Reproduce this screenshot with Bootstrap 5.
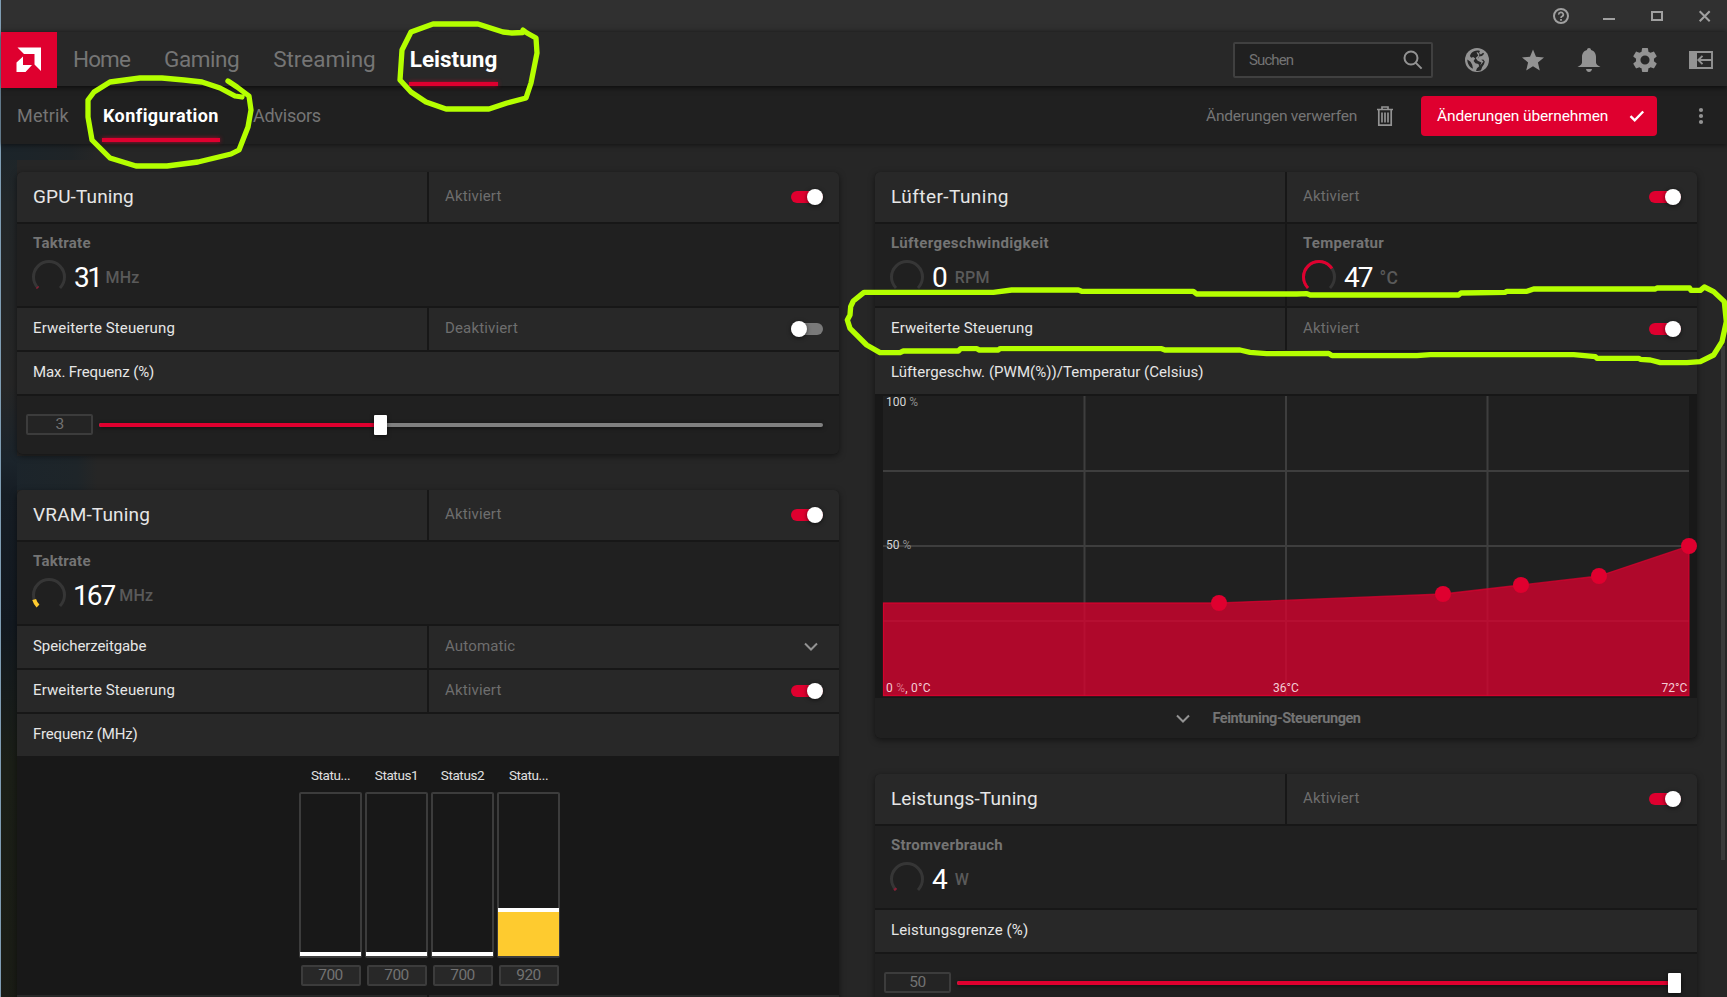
<!DOCTYPE html>
<html lang="de">
<head>
<meta charset="utf-8">
<meta name="viewport" content="width=device-width, initial-scale=1">
<title>Leistung – Konfiguration</title>
<link href="https://cdn.jsdelivr.net/npm/bootstrap@5.3.0/dist/css/bootstrap.min.css" rel="stylesheet">
<style>
:root{--red:#df002f;--icon:#939393;--muted:#6e6e6e;--line:#171717;--cell:#282828;--dark:#202020}
html,body{height:100%}
body{background:#262626;color:#e6e6e6;font-family:Roboto,"Liberation Sans",sans-serif;font-size:15px;line-height:20px;overflow:hidden}
svg{display:block;flex:none}
.app{height:997px;border-left:1px solid #7f9db3;background:linear-gradient(90deg,#1b242a 0,#1f2427 70px,#262626 96px,transparent 110px) 0 144px/100% 16px no-repeat,linear-gradient(#1d2529 0,#222628 60px,#262626 240px,#1b242b 316px,#161d24 350px,#131920 480px,#1b1f17 620px,#1a1b15 100%) 0 144px/16px 100% no-repeat,linear-gradient(90deg,#1b242b 0,#1e2529 76px,#262626 96px,transparent 110px) 0 456px/100% 34px no-repeat,#262626}
.titlebar{height:32px;background:#303030;padding-right:15px}
.mainbar{height:54px;background:#282828;z-index:2;box-shadow:0 1px 6px rgba(0,0,0,.75);padding-top:2px}
.brand{width:56px;height:56px;background:var(--red);margin:-2px 0 -2px}
.subbar{height:58px;background:var(--dark);z-index:1;box-shadow:0 1px 5px rgba(0,0,0,.55);padding:2px 0 0 16px}
.mainnav{gap:34px;margin-left:16px;font-size:22.5px}
.subnav{gap:34px;font-size:18px}
.tab{color:#757575;text-decoration:none;white-space:nowrap;height:54px;display:flex;align-items:center;position:relative}
.mainnav .tab{padding-bottom:2px}
.subnav .tab{height:58px;padding-bottom:1px}
.tab.on{color:#fff;font-weight:700}
.tab.on::after{content:"";position:absolute;left:-1px;right:-1px;bottom:1px;height:4px;background:var(--red);box-shadow:0 0 4px rgba(223,0,47,.7)}
.subnav .tab.on::after{bottom:3px}
.search{width:200px;height:36px;border:2px solid #404040;border-radius:2px;background:#202020;color:#737373;padding:0 8px 0 14px;margin-right:32px;letter-spacing:-.9px}
.apply{width:236px;height:40px;background:var(--red);border:0;border-radius:4px;color:#fff;font-size:15.5px;line-height:20px;padding:0 12px 1px 16px;letter-spacing:-.12px}
.discard{font-size:15.5px;color:#757575;letter-spacing:-.23px}
.content{padding:28px 29px 0 16px;gap:36px;height:853px;align-items:flex-start}
.stack{width:822px;gap:36px}
.tile{background:var(--line);border-radius:5px;gap:2px;box-shadow:0 2px 6px rgba(0,0,0,.5);overflow:hidden}
.split{display:grid;grid-template-columns:1fr 1fr;gap:2px}
.cell{background:var(--cell);height:42px;padding:0 16px 2px 16px;display:flex;align-items:center;justify-content:space-between;white-space:nowrap;letter-spacing:.12px}
.state{color:var(--muted);letter-spacing:.15px}
.head .cell{height:50px;padding-bottom:3px}
.head .name{font-size:19px;padding-bottom:1px}
.meter{background:var(--dark);height:82px;padding:9px 15px 0}
.meter .cap{font-weight:700;color:#747474;padding-left:1px;letter-spacing:.25px}
.reading{margin-top:7px;height:34px}
.num{font-size:28px;color:#fff;letter-spacing:-2px;margin-left:8px;line-height:34px;padding-top:1px}
.unit{font-size:16px;font-weight:500;color:#5a5a5a;margin-left:9px;padding-top:2px;letter-spacing:.2px}
.toggle{width:32px;height:16px;position:relative;margin-top:2px;flex:none}
.head .toggle{margin-top:3px}
.toggle::before{content:"";position:absolute;inset:2px 0;border-radius:6px;background:var(--red)}
.toggle::after{content:"";position:absolute;right:0;top:0;width:16px;height:16px;border-radius:50%;background:#fff;box-shadow:0 1px 4px rgba(0,0,0,.6)}
.toggle.off::before{background:#7a7a7a}
.toggle.off::after{right:auto;left:0}
.slide{background:var(--dark);height:58px;padding:0 16px 1px 9px}
.box{border:2px solid #3c3c3c;border-radius:2px;background:#242424;color:#727272;font-size:15.5px;letter-spacing:-.5px;line-height:17px;text-align:center;height:21px}
.slide .box{width:67px;margin-right:6px}
.track{height:4px;border-radius:2px;background:#808080;position:relative;box-shadow:0 1px 4px rgba(0,0,0,.5)}
.track i{display:block;height:4px;background:var(--red);border-radius:2px}
.track b{position:absolute;top:-8px;width:13px;height:20px;margin-left:-6.5px;background:#fff;border-radius:1px;box-shadow:0 1px 4px rgba(0,0,0,.6)}
.states{background:#181818;height:239px;margin-top:-2px;padding:9px 0 0 3px;gap:3px}
.stat{width:63px}
.stat .lbl{font-size:13.5px;letter-spacing:-.4px;line-height:20px;height:27px;color:#e0e0e0}
.well{height:166px;border:2px solid #3c3c3c;border-radius:2px}
.well i{display:block;background:#fecb2f;border-top:4px solid #fff;margin:0 -1px}
.stat .box{width:60px;margin:7px auto 0;background:#282828}
.fan{background:#181818;height:302px;padding:0 8px;overflow:visible}
.more{background:var(--dark);height:40px;margin-top:-2px;color:#747474;font-weight:700;font-size:14.5px;letter-spacing:-.46px;gap:22px;padding:2px 35px 0 0}
.scroll{width:4px;height:514px;background:#3a3a3a;position:absolute;left:1720px;top:346px}
.notes{position:absolute;inset:0;z-index:5;pointer-events:none}
</style>
</head>
<body>
<div class="app d-flex flex-column position-relative">
  <div class="titlebar d-flex align-items-center justify-content-end">
    <svg width="160" height="32" viewBox="1552 0 160 32" fill="none" stroke="#a0a0a0" stroke-width="2"><circle cx="1561" cy="16" r="7"/><path d="M1558.700 14.600a2.300 2.100 0 1 1 3.500 1.700q-1.200.6-1.200 1.600" stroke-width="1.700"/><path d="M1561 19v1.700" stroke-width="1.800"/><path d="M1603 19h12M1652 12h10v8h-10z"/><path d="m1699.700 11.200 10 10m0-10-10 10"/></svg>
  </div>

  <header class="mainbar d-flex align-items-center position-relative">
    <div class="brand d-flex align-self-start">
      <svg width="56" height="56" viewBox="1 32 56 56" fill="#fff"><path d="M17.500 47.500H41V71l-6.500-6.500V54H24z"/><path d="M23 56.500V65h9l-6.500 7H16.500V62.500z"/></svg>
    </div>
    <nav class="mainnav d-flex me-auto">
      <a class="tab" href="#" style="letter-spacing:-.89px">Home</a>
      <a class="tab" href="#" style="letter-spacing:-.45px">Gaming</a>
      <a class="tab" href="#">Streaming</a>
      <a class="tab on" href="#">Leistung</a>
    </nav>
    <div class="search d-flex align-items-center justify-content-between">Suchen
      <svg width="20" height="20" viewBox="0 0 20 20" fill="none" stroke="#939393" stroke-width="2"><circle cx="8" cy="8" r="6.500"/><path d="m12.600 12.600 6 6"/></svg>
    </div>
    <div class="d-flex align-items-center" style="gap:32px;margin-right:14px">
      <svg width="24" height="24" viewBox="0 0 24 24"><circle cx="12" cy="12" r="12" fill="#939393"/><path fill="#282828" d="M9 3.200c2-.8 4.500-.8 6-.2l-1 2 1.800 1.600 2.300-1.800 1.100 1-2.200 2.200-3 .6-1 2 2.200 1.400 3-.6 1.600 2.200-.8 2.600-1.800 2.800-1.200 3.200c-1.500.8-3.500 1-5 .6l1-2.500 2.200-2-.8-2.200-3-.8-1.800-2.400 1.600-2.400-2-1.600-2 .8-1.300-1.600C5.500 5.600 7 4 9 3.200zM2.300 11.500l3.200 2.200 1.700 3 .8 4c-3.600-1.600-5.700-5-5.700-9.200z"/><path fill="#939393" d="m11.500 4.500 1.800 3-2.600 2.600 2 2.600 3.800 1.700-1.500 3.400 3.500-4.300-3.500-2.800-2.200-.5 1.300-2 .2-2.200-1.500-1.700z"/></svg>
      <svg width="24" height="24" viewBox="0 0 24 24" fill="#939393"><path d="m12 1.500 3 7.300 8 .6-6.100 5.200 1.900 7.900L12 18.300l-6.800 4.200 1.900-7.900L1 9.400l8-.6z"/></svg>
      <svg width="24" height="24" viewBox="0 0 24 24" fill="#939393"><path d="M12 0c1.300 0 1.900.8 2 2 3.600 1 5 3.800 5 7v5.500c0 1.500 1.200 2.700 4.500 4.500H.5C3.800 17.200 5 16 5 14.500V9c0-3.200 1.400-6 5-7 .1-1.200.7-2 2-2zM9 21h6c-.3 1.800-1.500 3-3 3s-2.700-1.200-3-3z"/></svg>
      <svg width="24" height="24" viewBox="2 2 20 20" fill="#939393"><path d="M19.430 12.980c.040-.320.070-.640.070-.980s-.030-.660-.070-.980l2.110-1.650c.190-.150.240-.420.120-.640l-2-3.460c-.120-.220-.390-.300-.610-.220l-2.490 1c-.520-.400-1.080-.730-1.690-.980l-.380-2.650C14.460 2.180 14.250 2 14 2h-4c-.250 0-.460.180-.490.420l-.380 2.650c-.610.250-1.170.590-1.690.980l-2.490-1c-.230-.090-.490 0-.610.220l-2 3.460c-.130.220-.070.490.120.640l2.110 1.650c-.040.320-.070.650-.070.980s.030.660.070.980l-2.110 1.650c-.190.150-.240.420-.120.640l2 3.460c.120.220.390.300.610.220l2.490-1c.520.400 1.080.730 1.690.980l.380 2.650c.030.240.240.420.490.420h4c.250 0 .460-.180.490-.420l.380-2.650c.610-.250 1.170-.590 1.690-.980l2.490 1c.230.090.490 0 .610-.220l2-3.460c.120-.220.070-.490-.120-.640l-2.110-1.650zM12 15.800a3.800 3.800 0 1 1 0-7.600 3.800 3.800 0 0 1 0 7.600z"/></svg>
      <svg width="24" height="24" viewBox="0 0 24 24" fill="none" stroke="#939393" stroke-width="2"><path d="M0 3h8v18H0z" fill="#939393" stroke="none"/><path d="M1 4h22v16H1zM9.500 12H23M13.500 7.800 9.300 12l4.200 4.200" stroke-width="1.900"/></svg>
    </div>
  </header>

  <div class="subbar d-flex align-items-center position-relative">
    <nav class="subnav d-flex me-auto">
      <a class="tab" href="#" style="letter-spacing:.2px">Metrik</a>
      <a class="tab on" href="#" style="letter-spacing:.45px">Konfiguration</a>
      <a class="tab" href="#" style="letter-spacing:-.24px">Advisors</a>
    </nav>
    <span class="discard">Änderungen verwerfen</span>
    <svg class="ms-3" width="24" height="24" viewBox="0 0 24 24" fill="none" stroke="#939393" stroke-width="1.700"><path d="M4 5.500h16M9 5V3h6v2M5.800 6v15.200h12.400V6M9 8.500v10M12 8.500v10M15 8.500v10"/></svg>
    <button class="apply d-flex align-items-center justify-content-between" style="margin:0 36px 0 24px">Änderungen übernehmen
      <svg width="16" height="14" viewBox="0 0 16 14" fill="none" stroke="#fff" stroke-width="2.400"><path d="m1.500 7.200 4.200 4.200L14.200 2.500"/></svg>
    </button>
    <svg width="16" height="20" viewBox="0 0 16 20" fill="#939393" style="margin-right:18px"><circle cx="8" cy="4" r="2.100"/><circle cx="8" cy="10" r="2.100"/><circle cx="8" cy="16" r="2.100"/></svg>
  </div>

  <main class="content d-flex">
    <div class="stack d-flex flex-column">
      <section class="tile d-flex flex-column">
        <div class="split head"><div class="cell name">GPU-Tuning</div><div class="cell state">Aktiviert<span class="toggle"></span></div></div>
        <div class="meter"><div class="cap">Taktrate</div>
          <div class="reading d-flex align-items-center"><svg width="34" height="34" fill="none" stroke-width="3"><path stroke="#363636" d="M6 28A15.500 15.500 0 1 1 28 28"/><path stroke="#8c1c34" pathLength="100" stroke-dasharray="2 200" d="M6 28A15.500 15.500 0 1 1 28 28"/></svg><span class="num" style="letter-spacing:-2.500px">31</span><span class="unit" style="margin-left:5px">MHz</span></div></div>
        <div class="split"><div class="cell">Erweiterte Steuerung</div><div class="cell state">Deaktiviert<span class="toggle off"></span></div></div>
        <div class="cell" style="letter-spacing:-.1px">Max. Frequenz (%)</div>
        <div class="slide d-flex align-items-center"><div class="box">3</div><div class="track flex-grow-1"><i style="width:38.900%"></i><b style="left:38.900%"></b></div></div>
      </section>

      <section class="tile d-flex flex-column">
        <div class="split head"><div class="cell name" style="letter-spacing:.16px">VRAM-Tuning</div><div class="cell state">Aktiviert<span class="toggle"></span></div></div>
        <div class="meter"><div class="cap">Taktrate</div>
          <div class="reading d-flex align-items-center"><svg width="34" height="34" fill="none" stroke-width="3"><path stroke="#363636" d="M6 28A15.500 15.500 0 1 1 28 28"/><path stroke="#fecb2f" stroke-width="4" pathLength="100" stroke-dasharray="10.500 200" d="M6 28A15.500 15.500 0 1 1 28 28"/></svg><span class="num" style="margin-left:7px">167</span><span class="unit" style="margin-left:5px">MHz</span></div></div>
        <div class="split"><div class="cell" style="letter-spacing:-.1px">Speicherzeitgabe</div><div class="cell state" style="padding-right:20px">Automatic<svg width="16" height="10" fill="none" stroke="#939393" stroke-width="2" style="margin-top:2px"><path d="m2 1.500 6 6 6-6"/></svg></div></div>
        <div class="split"><div class="cell">Erweiterte Steuerung</div><div class="cell state">Aktiviert<span class="toggle"></span></div></div>
        <div class="cell" style="letter-spacing:-.15px">Frequenz (MHz)</div>
        <div class="states d-flex justify-content-center">
          <div class="stat text-center"><div class="lbl">Statu...</div><div class="well d-flex flex-column justify-content-end"><i style="height:4px"></i></div><div class="box">700</div></div>
          <div class="stat text-center"><div class="lbl">Status1</div><div class="well d-flex flex-column justify-content-end"><i style="height:4px"></i></div><div class="box">700</div></div>
          <div class="stat text-center"><div class="lbl">Status2</div><div class="well d-flex flex-column justify-content-end"><i style="height:4px"></i></div><div class="box">700</div></div>
          <div class="stat text-center"><div class="lbl">Statu...</div><div class="well d-flex flex-column justify-content-end"><i style="height:48px"></i></div><div class="box">920</div></div>
        </div>
        <div class="split" style="margin-top:-2px"><div class="cell"></div><div class="cell"></div></div>
      </section>
    </div>

    <div class="stack d-flex flex-column">
      <section class="tile d-flex flex-column">
        <div class="split head"><div class="cell name" style="letter-spacing:.45px">Lüfter-Tuning</div><div class="cell state">Aktiviert<span class="toggle"></span></div></div>
        <div class="split">
          <div class="meter"><div class="cap" style="letter-spacing:.37px">Lüftergeschwindigkeit</div>
            <div class="reading d-flex align-items-center"><svg width="34" height="34" fill="none" stroke-width="3"><path stroke="#363636" d="M6 28A15.500 15.500 0 1 1 28 28"/></svg><span class="num">0</span><span class="unit">RPM</span></div></div>
          <div class="meter"><div class="cap">Temperatur</div>
            <div class="reading d-flex align-items-center"><svg width="34" height="34" fill="none" stroke-width="3"><path stroke="#363636" d="M6 28A15.500 15.500 0 1 1 28 28"/><path stroke="#df002f" pathLength="100" stroke-dasharray="71 200" d="M6 28A15.500 15.500 0 1 1 28 28"/></svg><span class="num">47</span><span class="unit" style="margin-left:8px;font-size:17.500px">°C</span></div></div>
        </div>
        <div class="split"><div class="cell">Erweiterte Steuerung</div><div class="cell state">Aktiviert<span class="toggle"></span></div></div>
        <div class="cell" style="letter-spacing:.04px">Lüftergeschw. (PWM(%))/Temperatur (Celsius)</div>
        <div class="fan">
          <svg width="814" height="302" viewBox="883 396 814 302" font-size="12" fill="#d6d6d6" style="overflow:visible">
            <path fill="#202020" d="M883 396h806v300H883z"/>
            <path stroke="#3e3e3e" stroke-width="2" d="M1084.500 396v300M1286 396v300M1487.500 396v300M883 471h806M883 546h806M883 621h806"/>
            <path fill="#df002f" fill-opacity=".75" d="M883 603h336l224-9 78-9 78-9 90-30v150H883z"/>
            <path fill="none" stroke="#df002f" stroke-opacity=".7" stroke-width="1.300" d="M883.500 603H1219l224-9 78-9 78-9 90-30v149.500H883.500z"/>
            <g fill="#df002f"><circle cx="1219" cy="603" r="8"/><circle cx="1443" cy="594" r="8"/><circle cx="1521" cy="585" r="8"/><circle cx="1599" cy="576" r="8"/><circle cx="1689" cy="546" r="8"/></g>
            <text x="886" y="406">100 <tspan fill="#8a8a8a">%</tspan></text>
            <text x="886" y="549">50 <tspan fill="#8a8a8a">%</tspan></text>
            <g fill="#f4ccd5"><text x="886" y="692" letter-spacing=".25">0 <tspan fill="#dc7088">%</tspan>, 0°C</text><text x="1273" y="692">36°C</text><text x="1661.500" y="692">72°C</text></g>
          </svg>
        </div>
        <div class="more d-flex align-items-center justify-content-center"><svg width="14" height="10" fill="none" stroke="#939393" stroke-width="2"><path d="m1 1.500 6 6 6-6"/></svg>Feintuning-Steuerungen</div>
      </section>

      <section class="tile d-flex flex-column">
        <div class="split head"><div class="cell name">Leistungs-Tuning</div><div class="cell state">Aktiviert<span class="toggle"></span></div></div>
        <div class="meter"><div class="cap">Stromverbrauch</div>
          <div class="reading d-flex align-items-center"><svg width="34" height="34" fill="none" stroke-width="3"><path stroke="#363636" d="M6 28A15.500 15.500 0 1 1 28 28"/><path stroke="#8c1c34" pathLength="100" stroke-dasharray="3 200" d="M6 28A15.500 15.500 0 1 1 28 28"/></svg><span class="num">4</span><span class="unit">W</span></div></div>
        <div class="cell">Leistungsgrenze (%)</div>
        <div class="slide d-flex align-items-center"><div class="box">50</div><div class="track flex-grow-1"><i style="width:100%"></i><b style="left:calc(100% - 6.500px)"></b></div></div>
      </section>
    </div>
  </main>
  <div class="scroll"></div>
</div>

<!-- hand-drawn markers over the interface -->
<svg class="notes" width="1727" height="997" viewBox="0 0 1727 997" fill="none" stroke="#b4ff00" stroke-width="5.300" stroke-linecap="round" stroke-linejoin="round">
  <path d="M523 32.500 512 33l-9-1-25-8h-45l-22 8-9 18-2 30 11 12 15 10 20 7h43l18-6 19-5 5-15 6-30-1-15-9-5-4-3"/>
  <path d="m228 81 9 6 12 9 2 14-3 17-9 23-8 4-33 8-31 4h-31l-26-8-18-18-4-23V100l6-8 16-10 30-4h22l22 2 18 2 18 6 15 8 7 1"/>
  <path transform="translate(840 165) scale(.33333)" stroke-width="16" d="M1288 566H1280L1230 562 1200 555H975L965 551H480L475 555H418L410 551H362L355 558H190L180 563H120L80 540 30 490 22 465 30 450 32 425 40 408 72 382H460L515 375H715L725 379H1060L1070 387H1370L1401 386 1411 390H1856L1863 384 1996 382 2001 379H2061L2081 372H2446L2451 369H2549L2553 376H2581L2593 366 2621 380 2653 410 2659 470 2646 530 2621 570 2581 590 2541 593H2461L2431 585 2401 583 2396 580H2271L2266 575 2201 569H1771L1731 572H1476L1466 565Z"/>
</svg>
<script src="https://cdn.jsdelivr.net/npm/bootstrap@5.3.0/dist/js/bootstrap.bundle.min.js"></script>
</body>
</html>
